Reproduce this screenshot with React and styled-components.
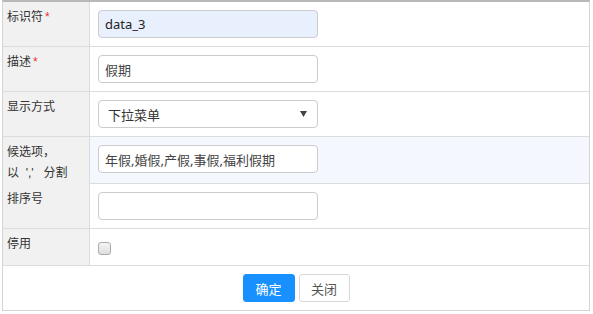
import React, { useState } from 'react';
import styled, { createGlobalStyle } from 'styled-components';

const GlobalStyle = createGlobalStyle`
    body {
        margin: 0;
        background: #fff;
        font-family: "Liberation Sans", "Noto Sans CJK SC", sans-serif;
        color: #333;
    }
`;

const Page = styled.div`
    padding-left: 2px;
    width: 589px;
`;

const FormTable = styled.div`
    border: 1px solid #d4d4d4;
    border-top: 2px solid #b8b8b8;
    width: 588px;
    box-sizing: border-box;
`;

const Row = styled.div`
    display: grid;
    grid-template-columns: 87px 1fr;
    height: ${(props) => props.height || 44}px;
    border-bottom: 1px solid #dcdcdc;
    background: ${(props) => (props.highlight ? '#f4f8fe' : '#fff')};
`;

const Label = styled.div`
    background: #f1f1f1;
    border-right: 1px solid #dcdcdc;
    padding: 5px 4px 0 4px;
    font-size: 12px;
    line-height: 21px;
    color: #333;
    white-space: pre;
`;

const Star = styled.span`
    color: #e33;
    margin-left: 2px;
`;

const Cell = styled.div`
    display: flex;
    align-items: flex-start;
    padding: 8px 0 0 8px;
`;

const TextInput = styled.input`
    width: 220px;
    height: 28px;
    box-sizing: border-box;
    border: 1px solid #ccc;
    border-radius: 4px;
    padding: 0 6px;
    font-family: "Noto Sans", "Noto Sans CJK SC", sans-serif;
    font-size: 13px;
    color: ${(props) => (props.filled ? '#222' : '#444')};
    background: ${(props) => (props.filled ? '#e8f0fe' : '#fff')};
    outline: none;
`;

const SelectBox = styled.div`
    width: 220px;
    height: 28px;
    box-sizing: border-box;
    border: 1px solid #ccc;
    border-radius: 4px;
    padding: 0 9px 0 9px;
    display: flex;
    align-items: center;
    justify-content: space-between;
    font-family: "Noto Sans", "Noto Sans CJK SC", sans-serif;
    font-size: 13px;
    color: #333;
    background: #fff;
`;

const Arrow = styled.svg`
    width: 7px;
    height: 6px;
    margin-right: 1px;
`;

const Check = styled.input`
    appearance: none;
    width: 13px;
    height: 13px;
    margin: 5px 0 0 0;
    border: 1px solid #aaa;
    border-radius: 3px;
    background: linear-gradient(#f4f4f4, #dedede);
`;

const Footer = styled.div`
    display: flex;
    justify-content: center;
    gap: 4px;
    height: 44px;
    box-sizing: border-box;
    padding: 8px 0 0 0;
`;

const Button = styled.button`
    width: ${(props) => (props.primary ? 52 : 51)}px;
    height: 28px;
    border-radius: 3px;
    border: 1px solid ${(props) => (props.primary ? '#1890ff' : '#d9d9d9')};
    background: ${(props) => (props.primary ? '#1890ff' : '#fff')};
    color: ${(props) => (props.primary ? '#fff' : '#555')};
    font-family: "Liberation Sans", "Noto Sans CJK SC", sans-serif;
    font-size: 13px;
    padding: 0;
    cursor: pointer;
`;

const App = () => {
    const [id, setId] = useState('data_3');
    const [desc, setDesc] = useState('假期');
    const [options, setOptions] = useState('年假,婚假,产假,事假,福利假期');
    const [order, setOrder] = useState('');

    return (
        <Page>
            <GlobalStyle />
            <FormTable>
                <Row>
                    <Label>标识符<Star>*</Star></Label>
                    <Cell>
                        <TextInput filled value={id} onChange={(e) => setId(e.target.value)} />
                    </Cell>
                </Row>
                <Row>
                    <Label>描述<Star>*</Star></Label>
                    <Cell>
                        <TextInput value={desc} onChange={(e) => setDesc(e.target.value)} />
                    </Cell>
                </Row>
                <Row>
                    <Label>显示方式</Label>
                    <Cell>
                        <SelectBox>
                            <span>下拉菜单</span>
                            <Arrow viewBox="0 0 7 6">
                                <path d="M0 0 H7 L3.5 6 Z" fill="#444" />
                            </Arrow>
                        </SelectBox>
                    </Cell>
                </Row>
                <Row height={46} highlight>
                    <Label>{"候选项，\n以  ','   分割"}</Label>
                    <Cell>
                        <TextInput value={options} onChange={(e) => setOptions(e.target.value)} />
                    </Cell>
                </Row>
                <Row>
                    <Label>排序号</Label>
                    <Cell>
                        <TextInput value={order} onChange={(e) => setOrder(e.target.value)} />
                    </Cell>
                </Row>
                <Row height={36}>
                    <Label>停用</Label>
                    <Cell>
                        <Check type="checkbox" />
                    </Cell>
                </Row>
                <Footer>
                    <Button primary>确定</Button>
                    <Button>关闭</Button>
                </Footer>
            </FormTable>
        </Page>
    );
};

export default App;
